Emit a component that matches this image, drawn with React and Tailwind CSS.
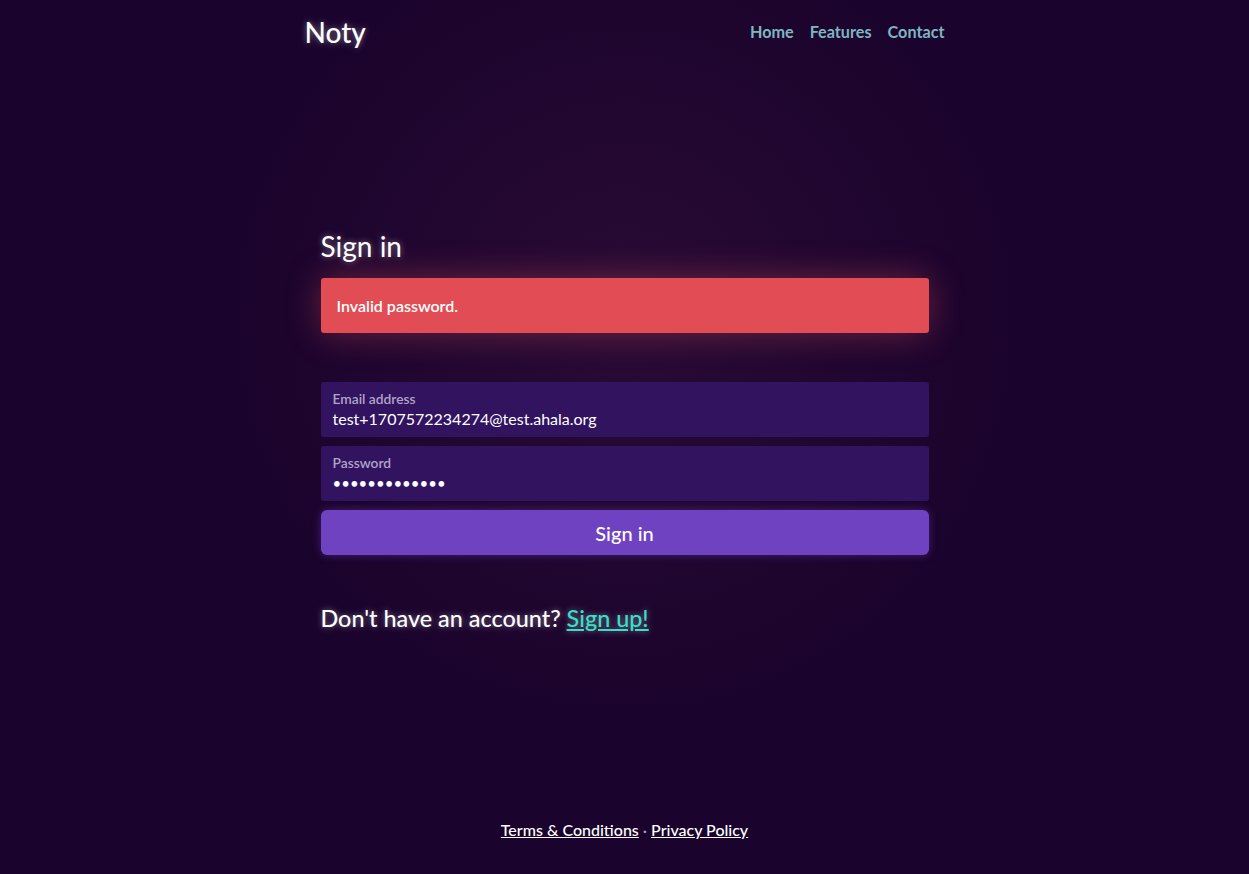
export default function App() {
  const glow = '[text-shadow:0_0_6px_rgba(255,255,255,0.45)]';

  return (
    <div className="min-h-screen flex flex-col bg-[#1a032c] bg-[radial-gradient(circle_at_625px_320px,rgba(60,20,65,0.45),rgba(26,3,44,0)_400px)] text-white font-['Lato','Noto_Sans',sans-serif]">
      {/* Header */}
      <header className="w-full max-w-[640px] mx-auto h-[64px] flex items-center justify-between">
        <div className={`text-[28px] leading-none font-medium ${glow}`}>Noty</div>
        <nav className="flex items-center gap-4 text-[16.2px] font-bold text-[#7eb6c0]">
          <a href="#">Home</a>
          <a href="#">Features</a>
          <a href="#">Contact</a>
        </nav>
      </header>

      {/* Sign in card */}
      <main className="flex-1 w-full max-w-[640px] mx-auto px-4 pt-[165px]">
        <h1 className={`text-[28px] leading-[34px] mb-[15px] ${glow}`}>Sign in</h1>

        <div className="h-[55px] flex items-center px-4 rounded-[3px] bg-[#e24d55] text-[16px] font-semibold shadow-[0_0_34px_rgba(226,77,85,0.4)]">
          Invalid password.
        </div>

        <form className="mt-[49px] flex flex-col gap-[9px]" onSubmit={(e) => e.preventDefault()}>
          <div className="h-[55px] rounded-[3px] bg-[#311360] px-3 pt-[9px]">
            <div className="text-[13.8px] leading-[16px] font-semibold text-[#b3a3c6]">Email address</div>
            <div className="mt-[2px] text-[16px] leading-[20px]">test+1707572234274@test.ahala.org</div>
          </div>
          <div className="h-[55px] rounded-[3px] bg-[#311360] px-3 pt-[9px]">
            <div className="text-[13.8px] leading-[16px] font-semibold text-[#b3a3c6]">Password</div>
            <div className="mt-[2px] text-[15px] leading-[20px]">•••••••••••••</div>
          </div>
          <button
            type="submit"
            className="h-[45px] rounded-md bg-[#6f42c1] text-[20px] font-medium text-white shadow-[0_0_10px_rgba(111,66,193,0.45)]"
          >
            Sign in
          </button>
        </form>

        <p className={`mt-[50px] text-[23.4px] leading-[27px] font-medium ${glow}`}>
          Don't have an account?{' '}
          <a href="#" className="underline text-[#2de3c8]">Sign up!</a>
        </p>
      </main>

      {/* Footer */}
      <footer className="pb-[34px] text-center text-[16px] leading-[20px] font-medium">
        <a href="#" className="underline">Terms &amp; Conditions</a>
        <span className="text-[#b0a0c0]"> · </span>
        <a href="#" className="underline">Privacy Policy</a>
      </footer>
    </div>
  );
}
